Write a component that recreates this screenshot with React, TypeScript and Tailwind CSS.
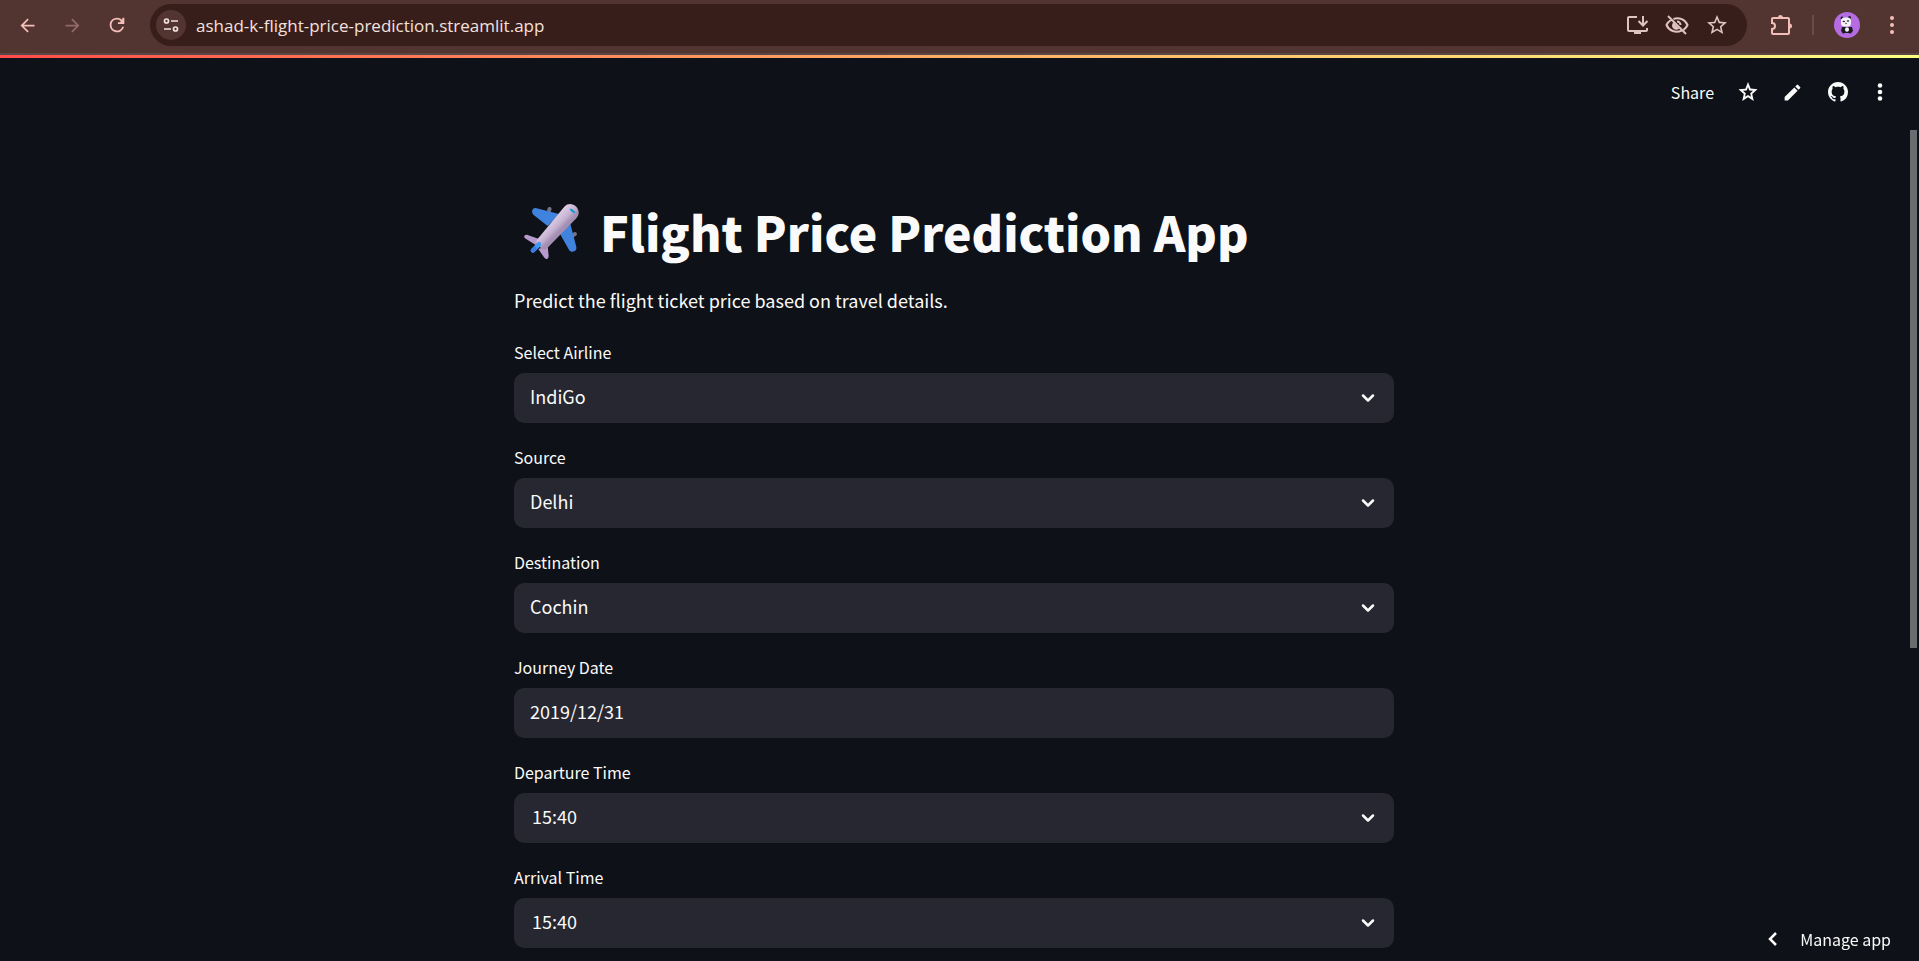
import { useState } from 'react';
import type { ReactNode } from 'react';

function BrowserButton({ label, className, children }: { label: string; className?: string; children: ReactNode }) {
  return (
    <button type="button" aria-label={label} className={'flex shrink-0 items-center justify-center ' + (className ?? '')}>
      {children}
    </button>
  );
}

const stroke = { fill: 'none', stroke: 'currentColor', strokeWidth: 2 } as const;

function BrowserBar() {
  return (
    <header className="flex h-[53px] shrink-0 items-center bg-[#523431] pb-[3px] text-[#f3bfb8]">
      <div className="flex items-center gap-[17px] pl-[13px]">
        <BrowserButton label="Back" className="size-7">
          <svg viewBox="0 0 24 24" className="size-[21px]" fill="currentColor">
            <path d="M20 11H7.8l5.6-5.6L12 4l-8 8 8 8 1.4-1.4L7.8 13H20z" />
          </svg>
        </BrowserButton>
        <BrowserButton label="Forward" className="size-7 text-[#8f6a66]">
          <svg viewBox="0 0 24 24" className="size-[21px]" fill="currentColor">
            <path d="M12 4l-1.4 1.4 5.6 5.6H4v2h12.2l-5.6 5.6L12 20l8-8z" />
          </svg>
        </BrowserButton>
        <BrowserButton label="Reload" className="size-7">
          <svg viewBox="0 0 24 24" className="size-[22px]" fill="currentColor">
            <path d="M17.650 6.350A7.960 7.960 0 0 0 12 4a8 8 0 1 0 7.730 10h-2.080A6 6 0 1 1 12 6c1.660 0 3.140.690 4.220 1.780L15 9h-2v2h7V4h-2z" />
          </svg>
        </BrowserButton>
      </div>
      <div className="ml-[19px] flex h-[42px] min-w-0 flex-1 items-center rounded-full bg-[#381e1b] pr-[18px] pl-[6px] text-[#dfc3bf]">
        <BrowserButton label="Site information" className="size-[30px] rounded-full bg-[#523431] text-[#f1dfdc]">
          <svg viewBox="0 0 16 16" className="size-4" fill="none" stroke="currentColor" strokeWidth="1.700">
            <circle cx="3.500" cy="4" r="2" />
            <path d="M8 4h7M1 12h7" />
            <circle cx="12.500" cy="12" r="2" />
          </svg>
        </BrowserButton>
        <input
          aria-label="Address"
          defaultValue="ashad-k-flight-price-prediction.streamlit.app"
          className="ml-[10px] h-8 min-w-0 flex-1 bg-transparent font-['Open_Sans',sans-serif] text-[17px] text-[#f3e1de] outline-none"
        />
        <div className="flex items-center gap-4">
          <BrowserButton label="Install" className="size-6">
            <svg viewBox="0 0 24 24" className="size-6" {...stroke}>
              <path d="M12 4H4a1 1 0 0 0-1 1v12a1 1 0 0 0 1 1h17a1 1 0 0 0 1-1v-2M18 3v9M13.500 8l4.500 4.500L22.500 8" />
              <path d="M9 18h7v3H9z" fill="currentColor" stroke="none" />
            </svg>
          </BrowserButton>
          <BrowserButton label="Tracking protection" className="size-6">
            <svg viewBox="0 0 24 24" className="size-6" {...stroke}>
              <path d="M3 3l18 18M8.500 6A11 11 0 0 1 22.500 12a11 11 0 0 1-4 4.800M6 7a11 11 0 0 0-4.500 5 11 11 0 0 0 15 5.600" />
              <path d="M12 8.500a3.500 3.500 0 0 1 3.500 3.500" />
              <path d="M8.300 9.500l6 6A4 4 0 0 1 8.300 9.500z" fill="currentColor" stroke="none" />
            </svg>
          </BrowserButton>
          <BrowserButton label="Bookmark" className="size-6">
            <svg viewBox="0 0 24 24" className="size-6" fill="currentColor">
              <path d="M22 9.240l-7.190-.620L12 2 9.190 8.630 2 9.240l5.460 4.730L5.820 21 12 17.270 18.180 21l-1.630-7.030zM12 15.400l-3.760 2.270 1-4.280-3.320-2.880 4.380-.380L12 6.100l1.710 4.040 4.380.380-3.320 2.880 1 4.280z" />
            </svg>
          </BrowserButton>
        </div>
      </div>
      <div className="flex items-center pr-[15px] pl-[22px]">
        <BrowserButton label="Extensions" className="size-6">
          <svg viewBox="0 0 24 24" className="size-6" {...stroke}>
            <path d="M4 5h15a1 1 0 0 1 1 1v14a1 1 0 0 1-1 1H4a1 1 0 0 1-1-1v-4a3 3 0 0 0 0-6V6a1 1 0 0 1 1-1z" />
            <path d="M9 4.500a2.500 2.500 0 0 1 5 0zM20.500 10.500a2.500 2.500 0 0 1 0 5z" fill="currentColor" stroke="none" />
          </svg>
        </BrowserButton>
        <span className="ml-[19px] h-5 w-[2px] bg-[#6d4b47]" />
        <BrowserButton label="Profile" className="ml-5 size-[26px] rounded-full bg-[#b56ce2]">
          <svg viewBox="0 0 26 26" className="size-[26px]">
            <path d="M8 15h10l1 4-2 2H9l-2-2z" fill="#1b1b20" />
            <circle cx="8" cy="6" r="1.500" fill="#1b1b20" />
            <circle cx="15.500" cy="5.500" r="1.500" fill="#1b1b20" />
            <rect x="7" y="5.500" width="10" height="9" rx="3.500" fill="#f5f2f7" />
            <ellipse cx="9.800" cy="9.500" rx="1.200" ry="0.800" fill="#1b1b20" />
            <ellipse cx="14" cy="9" rx="1.200" ry="0.800" fill="#1b1b20" />
            <circle cx="12" cy="11.500" r="0.700" fill="#1b1b20" />
            <ellipse cx="13" cy="17.500" rx="2" ry="2.300" fill="#f5f2f7" />
            <circle cx="9.500" cy="20" r="1.500" fill="#1b1b20" />
            <circle cx="16" cy="20" r="1.500" fill="#1b1b20" />
          </svg>
        </BrowserButton>
        <BrowserButton label="Browser menu" className="ml-5 size-6">
          <svg viewBox="0 0 24 24" className="size-6" fill="currentColor">
            <circle cx="12" cy="5" r="2" />
            <circle cx="12" cy="12" r="2" />
            <circle cx="12" cy="19" r="2" />
          </svg>
        </BrowserButton>
      </div>
    </header>
  );
}

function AppToolbar() {
  return (
    <div className="flex h-[72px] shrink-0 items-center justify-end pr-[27px] pb-1">
      <button type="button" className="text-base leading-6">Share</button>
      <button type="button" aria-label="Favorite" className="ml-[22px] flex">
        <svg viewBox="0 0 24 24" className="size-6" fill="currentColor">
          <path d="M21.500 9.240l-6.900-.620L12 2 9.400 8.630l-6.900.610 5.300 4.730L6.200 21 12 17.270 17.800 21l-1.600-7.030zM12 14.900l-3 1.900.8-3.500L7 10.800l3.700-.3L12 7.100l1.300 3.400 3.700.3-2.800 2.500.8 3.500z" />
        </svg>
      </button>
      <button type="button" aria-label="Edit" className="ml-[22px] flex">
        <svg viewBox="0 0 24 24" className="size-[21px]" fill="currentColor">
          <path d="M3 17.250V21h3.750L17.810 9.940l-3.750-3.750zM20.710 7.040a1 1 0 0 0 0-1.410l-2.340-2.340a1 1 0 0 0-1.410 0l-1.830 1.830 3.750 3.750z" />
        </svg>
      </button>
      <button type="button" aria-label="View source on GitHub" className="ml-[25px] flex">
        <svg viewBox="0 0 16 16" className="size-5" fill="currentColor">
          <path d="M8 0C3.580 0 0 3.580 0 8c0 3.540 2.290 6.530 5.470 7.590.4.070.55-.17.55-.38 0-.19-.01-.82-.01-1.490-2.010.37-2.530-.49-2.690-.94-.09-.23-.48-.94-.82-1.130-.28-.15-.68-.52-.01-.53.63-.01 1.080.58 1.230.82.72 1.210 1.870.87 2.330.66.07-.52.28-.87.51-1.070-1.780-.2-3.640-.89-3.640-3.950 0-.87.31-1.590.82-2.150-.08-.2-.36-1.020.08-2.120 0 0 .67-.21 2.200.82.64-.18 1.320-.27 2-.27s1.360.09 2 .27c1.530-1.040 2.200-.82 2.200-.82.44 1.100.16 1.920.08 2.120.51.56.82 1.270.82 2.150 0 3.070-1.870 3.750-3.650 3.950.29.25.54.73.54 1.480 0 1.070-.01 1.930-.01 2.200 0 .21.15.46.55.38A8.010 8.010 0 0 0 16 8c0-4.420-3.580-8-8-8z" />
        </svg>
      </button>
      <button type="button" aria-label="App menu" className="ml-5 flex">
        <svg viewBox="0 0 24 24" className="size-6" fill="currentColor">
          <circle cx="12" cy="5.500" r="2.300" />
          <circle cx="12" cy="12" r="2.300" />
          <circle cx="12" cy="18.500" r="2.300" />
        </svg>
      </button>
    </div>
  );
}

function Airplane() {
  return (
    <svg viewBox="24 22 168 168" className="size-14 shrink-0" role="img" aria-label="Airplane">
      <defs>
        <linearGradient id="fuselage" gradientUnits="userSpaceOnUse" x1="105" y1="80" x2="132" y2="107">
          <stop offset="0" stopColor="#dccbe4" />
          <stop offset="0.6" stopColor="#c6b3d2" />
          <stop offset="1" stopColor="#a48fb3" />
        </linearGradient>
      </defs>
      <path d="M97 40c2-8 12-8 13 0l-4 12-10-4zM172 112l8-3c8 2 8 10 0 13l-6 4z" fill="#77727f" />
      <path d="M62 37l70 18-34 36-42-33c-8-8-5-22 6-21zM166 84l18 70c3 14-16 19-22 8l-32-56z" fill="#3f83df" />
      <path d="M38 118l34 12-4 22-38-24c-6-5 0-13 8-10zM98 150l3 30c0 12-9 13-14 5L70 160z" fill="#b79bcd" />
      <path d="M148 33c12-12 26-8 34-1 9 8 14 22 2 36L94 160c-10 8-36-18-28-28z" fill="url(#fuselage)" />
      <path d="M164 40c5-3 16 5 17 13-6 0-15-6-17-13z" fill="#159ad6" />
      <path d="M54 164l18-18" stroke="#3d9bf2" strokeWidth="14" strokeLinecap="round" />
      <path d="M53 165l6-6" stroke="#3a78e8" strokeWidth="12" strokeLinecap="round" />
    </svg>
  );
}

const labelStyle = 'mb-[7px] block text-base leading-7';
const inputStyle = 'block h-[50px] w-full appearance-none rounded-[10px] bg-[#262730] pr-12 pb-1 text-lg text-[#fafafa] outline-none';

function SelectField({ id, label, options, indent }: { id: string; label: string; options: string[]; indent?: boolean }) {
  const [value, setValue] = useState(options[0]);
  return (
    <div>
      <label htmlFor={id} className={labelStyle}>{label}</label>
      <div className="relative">
        <select
          id={id}
          value={value}
          onChange={(e) => setValue(e.target.value)}
          className={inputStyle + (indent ? ' pl-[18px]' : ' pl-4')}
        >
          {options.map((o) => (
            <option key={o}>{o}</option>
          ))}
        </select>
        <svg viewBox="0 0 14 10" className="pointer-events-none absolute top-5 right-[19px] h-[10px] w-[14px]" fill="none" stroke="#fafafa" strokeWidth="2.500" strokeLinecap="round" strokeLinejoin="round">
          <path d="M2 2.500l5 5 5-5" />
        </svg>
      </div>
    </div>
  );
}

export default function App() {
  return (
    <div className="flex h-screen flex-col overflow-hidden bg-[#0e1117] font-['Noto_Sans_CJK_SC',sans-serif] text-[#fafafa]">
      <BrowserBar />
      <div className="h-[2px] shrink-0 bg-[#5a4644]" />
      <div className="h-[3px] shrink-0 bg-linear-to-r from-[#ff4b4b] to-[#ffff80]" />
      <AppToolbar />
      <div className="flex min-h-0 flex-1 items-start">
        <main className="flex min-w-0 flex-1 justify-center pr-[22px] pl-5">
          <div className="w-full max-w-[880px] pt-[67px]">
            <h1 className="flex h-[68px] items-center pl-[9px] text-5xl font-black">
              <Airplane />
              <span className="ml-[21px] whitespace-nowrap">Flight Price Prediction App</span>
            </h1>
            <p className="mt-5 text-lg leading-[30px]">Predict the flight ticket price based on travel details.</p>
            <form className="mt-[23px] flex flex-col gap-5" onSubmit={(e) => e.preventDefault()}>
              <SelectField id="airline" label="Select Airline" options={['IndiGo', 'Air India', 'Jet Airways', 'SpiceJet']} />
              <SelectField id="source" label="Source" options={['Delhi', 'Kolkata', 'Mumbai', 'Chennai']} />
              <SelectField id="destination" label="Destination" options={['Cochin', 'Banglore', 'Hyderabad']} />
              <div>
                <label htmlFor="journey" className={labelStyle}>Journey Date</label>
                <input id="journey" type="text" defaultValue="2019/12/31" className={inputStyle + ' pl-4'} />
              </div>
              <SelectField id="departure" label="Departure Time" options={['15:40', '15:55', '16:10']} indent />
              <SelectField id="arrival" label="Arrival Time" options={['15:40', '15:55', '16:10']} indent />
            </form>
          </div>
        </main>
        <div className="mr-[2px] h-[518px] w-[7px] shrink-0 bg-[#6b6c70]" />
      </div>
      <button type="button" className="fixed right-7 bottom-2 flex items-center gap-[22px] text-base leading-7">
        <svg viewBox="0 0 12 18" className="h-[18px] w-3" fill="none" stroke="currentColor" strokeWidth="2.500">
          <path d="M10 3L4 9l6 6" />
        </svg>
        Manage app
      </button>
    </div>
  );
}
